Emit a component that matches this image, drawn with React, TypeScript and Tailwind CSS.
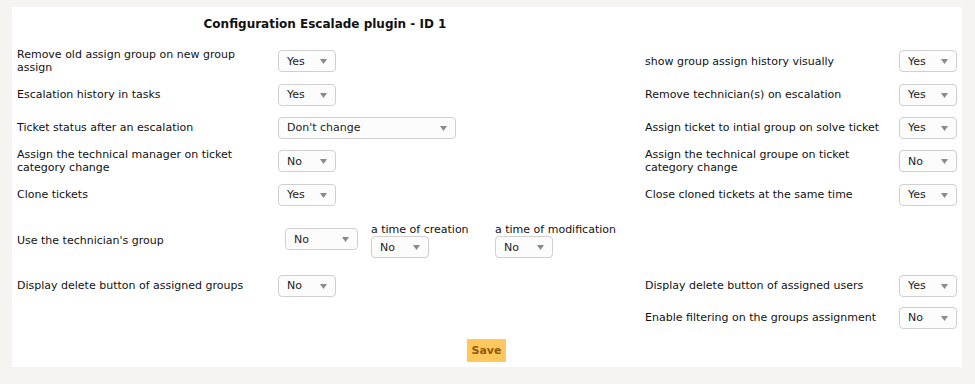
import React from "react";

function Sel({ v, w = 58 }: { v: string; w?: number }) {
  return (
    <div
      className="flex h-[22px] items-center justify-between rounded-[4px] border border-[#d0d0d0] bg-[#fcfcfc] pl-[8px] pr-[8px] text-[#222]"
      style={{ width: w }}
    >
      <span>{v}</span>
      <svg width="7" height="5" viewBox="0 0 7 5" className="mt-[1px]">
        <path d="M0 0 L7 0 L3.5 5 Z" fill="#8a8a8a" />
      </svg>
    </div>
  );
}

function Row({
  h,
  l,
  lv,
  r,
  rv,
  lw,
}: {
  h: number;
  l?: string;
  lv?: string;
  r?: string;
  rv?: string;
  lw?: number;
}) {
  return (
    <div className="flex items-center" style={{ height: h }}>
      <div className="w-[261px] pr-[12px]">{l}</div>
      <div className="w-[367px]">{lv && <Sel v={lv} w={lw} />}</div>
      <div className="w-[254px] pr-[8px]">{r}</div>
      <div>{rv && <Sel v={rv} />}</div>
    </div>
  );
}

export default function App() {
  return (
    <div
      className="min-h-[384px] w-[975px] bg-[#f5f4f1] pt-[7px] text-[11px] leading-[13px] text-[#111]"
      style={{ fontFamily: '"DejaVu Sans", Verdana, sans-serif' }}
    >
      <div className="ml-[12px] w-[950px] bg-white pl-[5px]">
        <div className="flex h-[34px] items-center">
          <div className="w-[616px] text-center text-[12px] font-bold">
            Configuration Escalade plugin - ID 1
          </div>
        </div>
        <div className="h-[3px]" />
        <Row h={34} l="Remove old assign group on new group assign" lv="Yes" r="show group assign history visually" rv="Yes" />
        <Row h={33} l="Escalation history in tasks" lv="Yes" r="Remove technician(s) on escalation" rv="Yes" />
        <Row h={33} l="Ticket status after an escalation" lv="Don't change" lw={178} r="Assign ticket to intial group on solve ticket" rv="Yes" />
        <Row h={34} l="Assign the technical manager on ticket category change" lv="No" r="Assign the technical groupe on ticket category change" rv="No" />
        <Row h={33} l="Clone tickets" lv="Yes" r="Close cloned tickets at the same time" rv="Yes" />
        <div className="flex h-[56px] items-center">
          <div className="w-[261px] pt-[3px]">Use the technician's group</div>
          <div className="flex w-[367px] items-center">
            <div className="ml-[7px] mr-[13px]">
              <Sel v="No" w={73} />
            </div>
            <div className="mt-[3px] w-[124px]">
              <div>a time of creation</div>
              <Sel v="No" />
            </div>
            <div className="mt-[3px]">
              <div>a time of modification</div>
              <Sel v="No" />
            </div>
          </div>
        </div>
        <div className="h-[2px]" />
        <Row h={33} l="Display delete button of assigned groups" lv="No" r="Display delete button of assigned users" rv="Yes" />
        <Row h={31} r="Enable filtering on the groups assignment" rv="No" />
        <div className="flex h-[34px] items-center">
          <div className="ml-[450px] flex h-[23px] w-[39px] items-center justify-center bg-[#fec85c] font-bold text-[#8f5a0a]">
            Save
          </div>
        </div>
      </div>
    </div>
  );
}
